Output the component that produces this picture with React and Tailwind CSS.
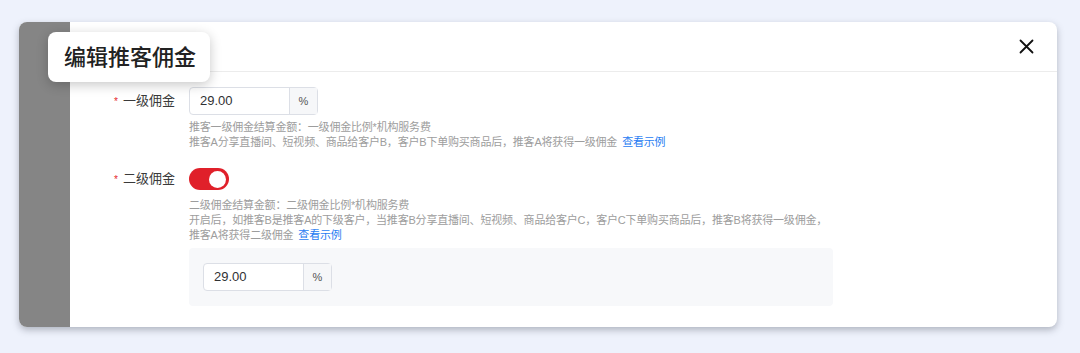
import React from 'react';

const font = { fontFamily: '"Liberation Sans", "Noto Sans CJK SC", sans-serif' };

const PercentInput = () => (
    <div className="flex h-[28px] w-[129px] rounded-[4px] border border-[#dcdfe6] bg-white">
        <div className="flex flex-1 items-center pl-[10px] text-[13px] text-[#303133]">29.00</div>
        <div className="flex w-[28px] items-center justify-center border-l border-[#dcdfe6] bg-[#f6f7f9] text-[11px] text-[#555]">%</div>
    </div>
);

const Label = ({ text }) => (
    <div className="flex h-[28px] w-[105px] items-center justify-end gap-[5px] text-[13px] text-[#3a3a3a]">
        <span className="text-[10px] text-[#e5262b]">*</span>
        <span>{text}</span>
    </div>
);

const Help = ({ children }) => (
    <div className="mt-[5px] text-[11px] leading-[15px] tracking-[-0.2px] text-[#9d9d9d]">{children}</div>
);

const Link = () => <span className="ml-[5px] text-[#1f7cf2]">查看示例</span>;

export default function App() {
    return (
        <div className="h-[353px] w-[1080px] bg-[#eef2fc] pt-[22px] pl-[19px]" style={font}>
            <div className="relative flex h-[305px] w-[1038px] rounded-[8px] bg-white shadow-[0_3px_7px_rgba(60,65,80,0.35)]">
                <div className="w-[51px] rounded-l-[8px] bg-[#858585]" />
                <div className="flex flex-1 flex-col">
                    <div className="flex h-[50px] items-center justify-end border-b border-[#ececec] pr-[23px]">
                        <svg width="15" height="15" viewBox="0 0 15 15" fill="none" stroke="#111" strokeWidth="1.8" strokeLinecap="round">
                            <path d="M1.5 1.5 13.5 13.5M13.5 1.5 1.5 13.5" />
                        </svg>
                    </div>

                    <div className="flex flex-col gap-[15px] pt-[15px]">
                        <div className="flex gap-[14px]">
                            <Label text="一级佣金" />
                            <div>
                                <PercentInput />
                                <Help>
                                    <div>推客一级佣金结算金额：一级佣金比例*机构服务费</div>
                                    <div>推客A分享直播间、短视频、商品给客户B，客户B下单购买商品后，推客A将获得一级佣金<Link /></div>
                                </Help>
                            </div>
                        </div>

                        <div className="flex gap-[14px]">
                            <Label text="二级佣金" />
                            <div>
                                <div className="flex h-[28px] items-center">
                                    <div className="flex h-[22px] w-[40px] items-center justify-end rounded-full bg-[#e0202a] pr-[3px]">
                                        <div className="h-[17px] w-[17px] rounded-full bg-white" />
                                    </div>
                                </div>
                                <Help>
                                    <div>二级佣金结算金额：二级佣金比例*机构服务费</div>
                                    <div>开启后，如推客B是推客A的下级客户，当推客B分享直播间、短视频、商品给客户C，客户C下单购买商品后，推客B将获得一级佣金，</div>
                                    <div>推客A将获得二级佣金<Link /></div>
                                </Help>
                                <div className="mt-[5px] w-[644px] rounded-[4px] bg-[#f7f8fa] px-[14px] py-[15px]">
                                    <PercentInput />
                                </div>
                            </div>
                        </div>
                    </div>
                </div>

                <div className="absolute top-[10px] left-[29px] flex h-[50px] w-[162px] items-center rounded-[8px] bg-white pl-[16px] text-[22px] font-medium text-[#222] shadow-[0_3px_12px_rgba(0,0,0,0.22)]">
                    编辑推客佣金
                </div>
            </div>
        </div>
    );
}
